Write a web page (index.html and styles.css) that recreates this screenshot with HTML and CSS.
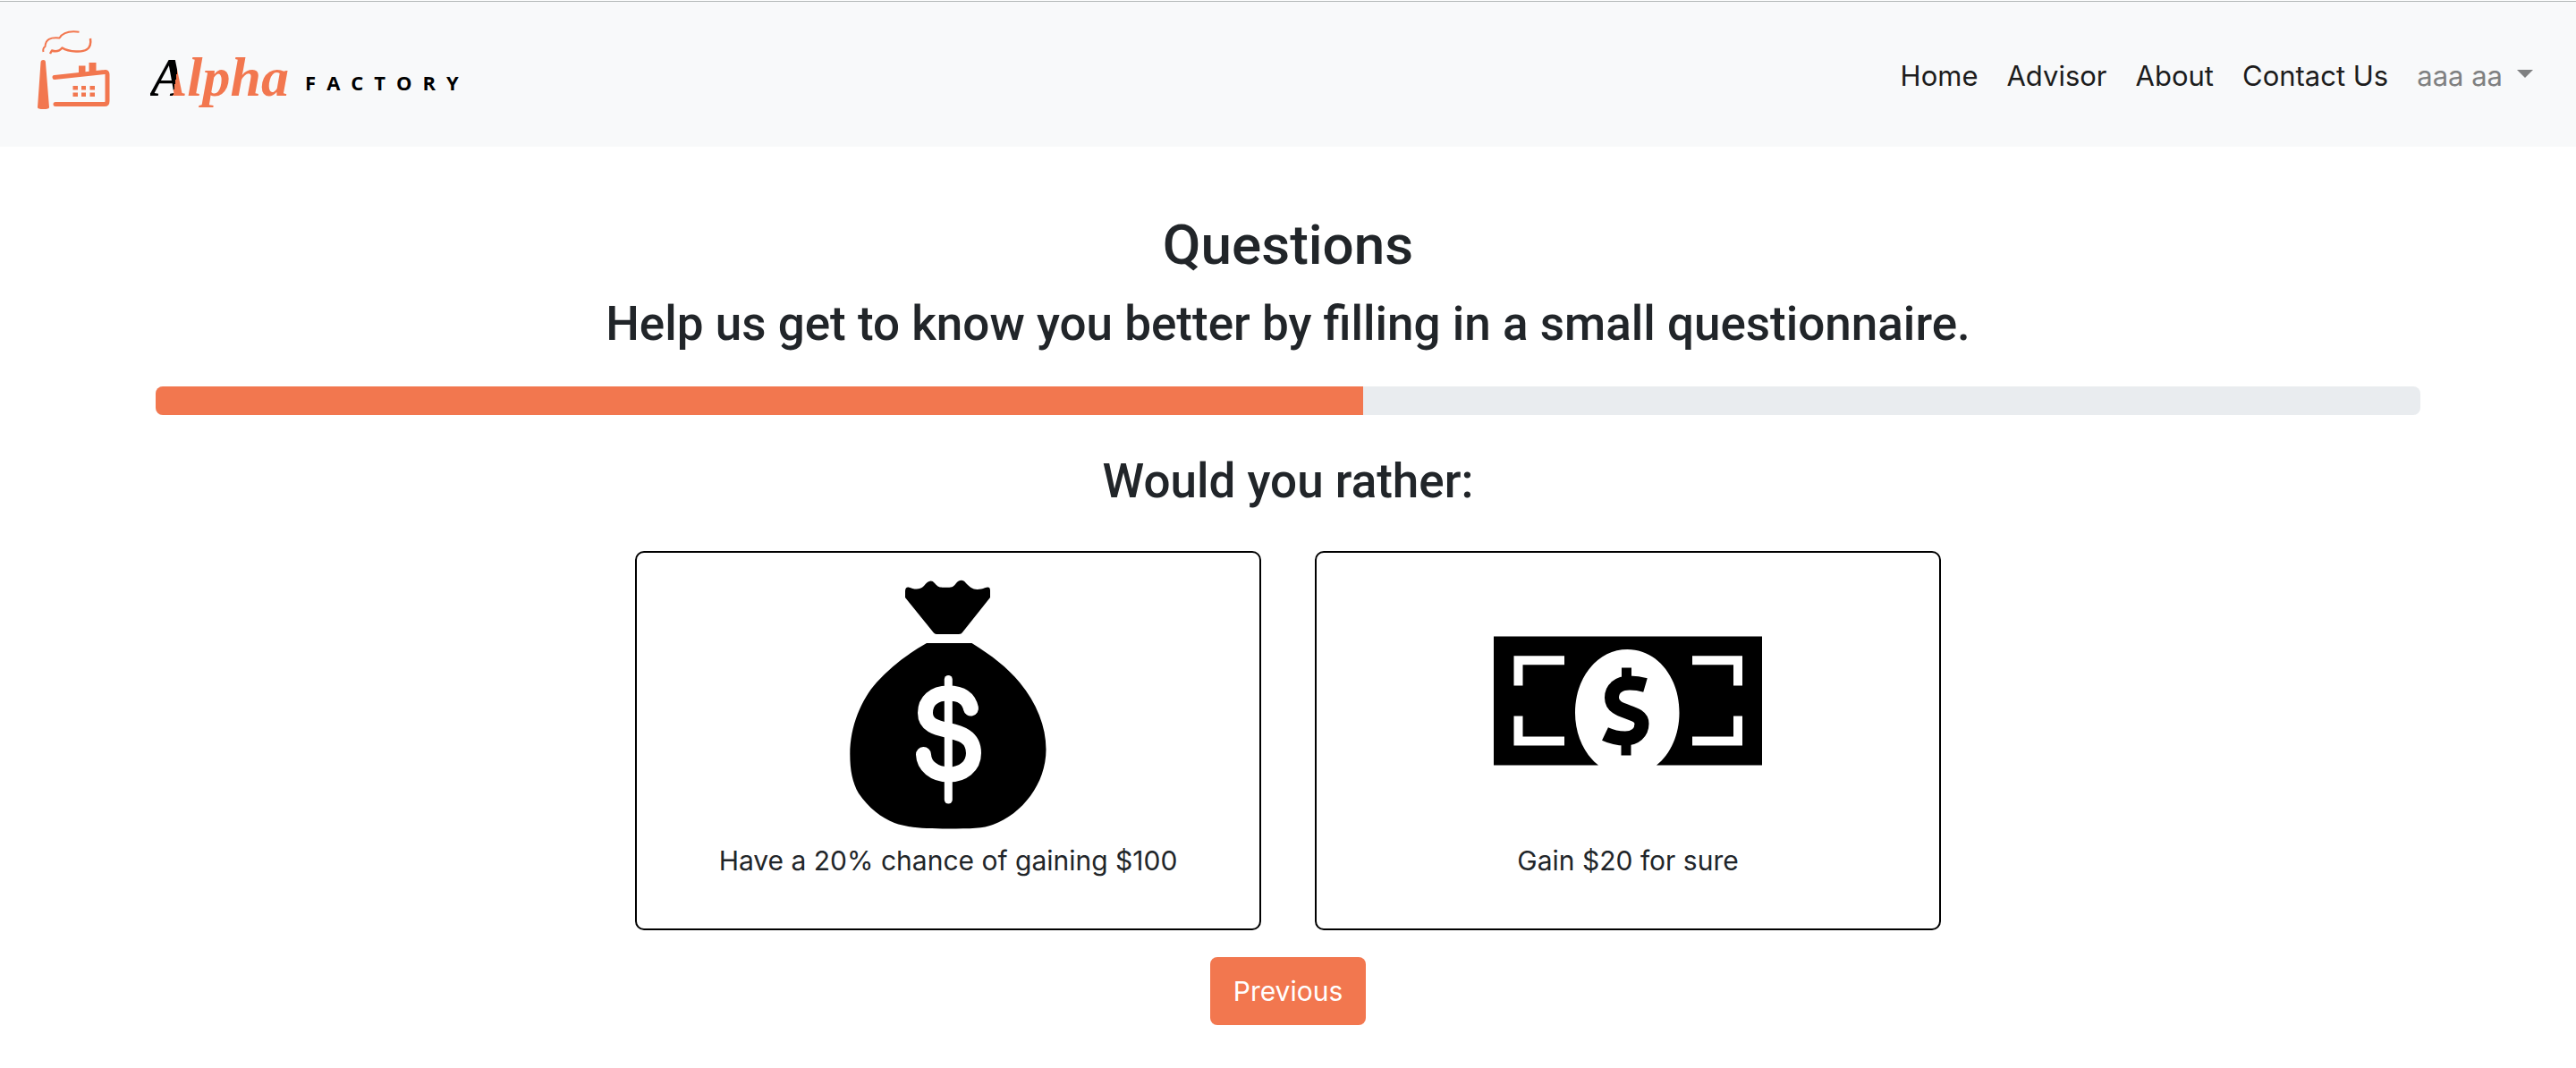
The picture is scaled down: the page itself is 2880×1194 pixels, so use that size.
FILE: index.html
```html
<!DOCTYPE html>
<html lang="en">
<head>
<meta charset="utf-8">
<meta name="viewport" content="width=device-width, initial-scale=1">
<title>Alpha Factory</title>
<link rel="stylesheet" href="styles.css">
</head>
<body>
<header class="navbar">
  <a class="brand" href="#">
    <svg class="brand-icon" viewBox="0 0 110 126" aria-hidden="true">
      <path class="fill" d="M15.500 50Q15.500 47 18.500 47Q21 47 21 50L25 100Q25 102 18.500 102Q12 102 12 100Z"/>
      <path class="fill" d="M58 53.500h7.500V64H58zM69.500 50h8v13h-8z"/>
      <path class="wall" d="M31 66.500L87 60.500Q90 60 90 63V93Q90 96.500 87 96.500H32"/>
      <path class="fill" d="M51.500 76h5.500v4.500h-5.500zM61 76h5v4.500h-5zM70.500 76h5.500v4.500h-5.500zM51.500 83.500h5.500v4.500h-5.500zM61 83.500h5v4.500h-5zM70.500 83.500h5.500v4.500h-5.500z"/>
      <path class="smoke" d="M18.500 38Q17.500 34 20.500 32C21 24 26 21.500 36.500 22.500Q42 13.500 58.500 15.800"/>
      <path class="smoke smoke-low" d="M71 23C73 36 64 38 55 37.500Q45 37 39.500 33.500Q35 39 28 36.500L26 40"/>
    </svg>
    <span class="alpha"><span class="initial">A</span>lpha</span>
    <span class="factory">FACTORY</span>
  </a>
  <nav class="nav">
    <a href="#">Home</a>
    <a href="#">Advisor</a>
    <a href="#">About</a>
    <a href="#">Contact Us</a>
    <button class="user" type="button">aaa aa<span class="caret"></span></button>
  </nav>
</header>
<main class="page">
  <h1>Questions</h1>
  <h2 class="lead">Help us get to know you better by filling in a small questionnaire.</h2>
  <div class="progress" role="progressbar" aria-valuenow="8" aria-valuemin="0" aria-valuemax="15" aria-label="Questionnaire progress"><div class="progress-bar" style="width: 53.333%"></div></div>
  <h2 class="question">Would you rather:</h2>
  <div class="choices">
    <button class="choice" type="button">
      <svg class="picture" viewBox="0 0 300 300" aria-hidden="true">
        <path d="M102 32V25C102 21 104 20 106 20.500C112 23 118 24 123 19C127 14 131 11 135 16C139 21 141 20.700 147 20.700C155 21 156 20 159 16C163 11.500 167 12 170 16C175 21 178 24 187 22.500C192 21 197 18 197 24V32L166 71Q165 73 162 73H137Q135 73 133.500 71Z"/>
        <path d="M126 83H176.500C199 97 216 110 230 127C249 150 259.500 176 259.500 202C259.500 240 233 274 200 286C190 290 175 290.500 150 290.500C125 290.500 107 290 90 284C75 278 61 267 50 251C43 239 40.300 225 40.300 207C40.300 176 53 146 70 127C86 109 105 95 126 83Z"/>
        <path class="bag-sign" d="M175.500 156C173 145 165 139 150 139C134 139 124.500 148 124.500 161C124.500 190 178.500 170 178.500 206C178.500 221 166 230 151 230C134 230 123 220 122.500 207.500"/>
        <path class="bag-bar" d="M150.300 123.500V258"/>
      </svg>
      <span>Have a 20% chance of gaining $100</span>
    </button>
    <button class="choice" type="button">
      <svg class="picture" viewBox="0 0 300 300" aria-hidden="true">
        <path fill-rule="evenodd" d="M0 75.500H300V219.500H182C198 207 207.500 185 207.500 161C207.500 120 182 90 149.500 90C117 90 91 120 91 161C91 185 101 207 117 219.500H0Z"/>
        <path class="brackets" d="M79 102.300H27.500V130.500M222 102.300H273V130.500M79 192.500H27.500V164.500M222 192.500H273V164.500"/>
        <path class="bill-sign" d="M169.500 130Q161 127.500 152 127.500C140 127.500 132 134 132 144C132 163 165.500 157 165.500 173C165.500 183 158 189.500 147 189.500Q135 189.500 124.500 184.500"/>
        <path class="bill-bar" d="M148.500 110.500V125M148 192V208.500"/>
      </svg>
      <span>Gain $20 for sure</span>
    </button>
  </div>
  <button class="previous" type="button">Previous</button>
</main>
</body>
</html>
```
FILE: styles.css
```css
* { box-sizing: border-box; }
body { margin: 0; padding-top: 1px; background: #fff; color: #212529; font: 30px/48px Inter, "Liberation Sans", sans-serif; }
a { color: inherit; text-decoration: none; }
button { font: inherit; color: inherit; background: none; border: 0; padding: 0; cursor: pointer; }

.navbar { display: flex; align-items: center; justify-content: space-between; min-height: 163px; padding: 0 48px 0 30px; background: #f8f9fa; border-top: 1px solid #b1b6b6; }
.brand { display: flex; align-items: center; }
.brand-icon { width: 110px; height: 126px; }
.fill { fill: #f2774f; }
.wall, .smoke { fill: none; stroke: #f2774f; stroke-linecap: round; stroke-linejoin: round; stroke-width: 5; }
.smoke { stroke-width: 2; stroke-linecap: butt; }
.smoke-low { stroke-width: 2.5; }
.alpha { margin-left: 28px; padding-top: 6px; color: #f2774f; font: italic 700 62px/64px "Liberation Serif", serif; }
.initial { background: linear-gradient(100deg, #000 66%, #f2774f 66%); background-clip: text; color: transparent; }
.factory { margin-left: 18px; padding-top: 18px; color: #000; font: 700 22px/24px "Open Sans", sans-serif; letter-spacing: 12px; }
.nav { display: flex; align-items: center; gap: 32px; padding-top: 4px; color: #1c1c1c; font-size: 31px; }
.user { display: flex; align-items: center; gap: 16px; color: #7f8081; }
.caret { margin-bottom: 6px; border: 9px solid transparent; border-top-color: currentColor; border-bottom: 0; }

.page { display: flex; flex-direction: column; align-items: center; padding: 72px 174px 48px; text-align: center; }
h1, h2 { margin: 0; font-family: Roboto, sans-serif; font-weight: 500; }
h1 { font-size: 62px; line-height: 76px; }
h2 { font-size: 53px; line-height: 68px; }
.lead { margin-top: 16px; }
.progress { width: 100%; height: 32px; margin-top: 36px; overflow: hidden; background: #e9ecef; border-radius: 8px; }
.progress-bar { height: 100%; background: #f2774f; }
.question { margin-top: 40px; }
.choices { display: flex; gap: 60px; margin-top: 44px; }
.choice { display: flex; flex-direction: column; align-items: center; gap: 2px; width: 700px; padding: 18px 0 52px; border: 2px solid #000; border-radius: 10px; }
.picture { width: 300px; height: 300px; }
.bag-sign, .bag-bar, .brackets { fill: none; stroke: #fff; stroke-width: 17; stroke-linecap: round; }
.bag-bar { stroke-width: 9; }
.brackets { stroke-width: 10; stroke-linecap: butt; }
.bill-sign, .bill-bar { fill: none; stroke: #000; stroke-width: 16; }
.bill-bar { stroke-width: 11; }
.previous { margin-top: 30px; padding: 14px 26px; color: #fff; background: #f2774f; border-radius: 8px; }
```
